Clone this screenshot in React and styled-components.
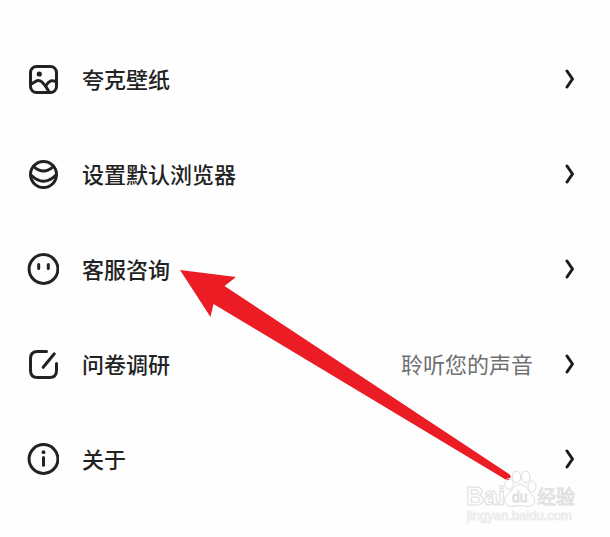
import React from "react";
import styled, { createGlobalStyle } from "styled-components";

const WallpaperIcon = () => (
  <Icon viewBox="0 0 32 32">
    <rect x="3.5" y="3.5" width="26" height="26" rx="6" />
    <circle className="solid" cx="12.3" cy="11" r="2.6" />
    <path d="M3.5 21.5 L8.5 18.4 Q12 16.2 15 19 Q19 23 22 28.7" />
    <path d="M18.8 22.8 Q23.5 15 29.5 19" />
  </Icon>
);

const BrowserIcon = () => (
  <Icon viewBox="0 0 32 32">
    <circle cx="16.5" cy="16.5" r="13" />
    <path d="M6.5 8.5 Q16.5 17.5 26.5 8.5" />
    <path d="M4 17 Q16.5 29.5 29 17" />
  </Icon>
);

const ServiceIcon = () => (
  <Icon viewBox="0 0 32 32">
    <circle cx="16.5" cy="16" r="14.4" />
    <path d="M11.7 11.5 V15.5 M21.3 11.5 V15.5" />
  </Icon>
);

const SurveyIcon = () => (
  <Icon viewBox="0 0 32 32">
    <path d="M19.5 3.5 H10.5 Q3.5 3.5 3.5 10.5 V22.5 Q3.5 29.5 10.5 29.5 H22.5 Q29.5 29.5 29.5 22.5 V15.5" />
    <path d="M27.3 5.8 L16.2 19.3" />
  </Icon>
);

const AboutIcon = () => (
  <Icon viewBox="0 0 32 32">
    <circle cx="16.5" cy="16" r="14.4" />
    <circle className="solid" cx="16.5" cy="9.2" r="1.9" />
    <path d="M16.5 14.5 V22.3" />
  </Icon>
);

const items = [
  { label: "夸克壁纸", icon: WallpaperIcon },
  { label: "设置默认浏览器", icon: BrowserIcon },
  { label: "客服咨询", icon: ServiceIcon },
  { label: "问卷调研", icon: SurveyIcon, note: "聆听您的声音" },
  { label: "关于", icon: AboutIcon },
];

const MenuRow = ({ item }) => {
  const ItemIcon = item.icon;
  return (
    <li>
      <RowButton type="button">
        <ItemIcon />
        <Label>{item.label}</Label>
        {item.note ? <Note>{item.note}</Note> : null}
        <Chevron viewBox="0 0 10 20" aria-hidden="true">
          <path d="M2 2 L7.5 10 L2 18" />
        </Chevron>
      </RowButton>
    </li>
  );
};

const App = () => {
  return (
    <Page>
      <GlobalStyle />
      <MenuList>
        {items.map((item) => (
          <MenuRow key={item.label} item={item} />
        ))}
      </MenuList>
      <Arrow viewBox="0 0 332 212" aria-hidden="true">
        <path d="M0 0 L56 7 L44.5 16 L329 204 A3.2 3.2 0 0 1 325.5 209.5 L33.5 34 L30.5 47 Z" />
      </Arrow>
      <Watermark viewBox="0 0 116 56" aria-hidden="true">
        <ellipse cx="45" cy="16" rx="4.3" ry="5.5" />
        <ellipse cx="52.5" cy="9" rx="4.3" ry="5.8" />
        <ellipse cx="61.7" cy="9" rx="4.3" ry="5.8" />
        <ellipse cx="68" cy="18.5" rx="4" ry="5.5" />
        <path d="M56 16.5 C62 16.5 63 21 67 25.5 C74 33 70 39 63 38.5 C60 38.5 59 37.5 56 37.5 C53 37.5 51 38.5 48 38.500 C40 38.5 38 31 44.5 25.500 C49.5 21.500 50 16.500 56 16.5 Z" />
        <text className="brand" x="2" y="37">
          Bai
        </text>
        <text className="du" x="48" y="34">
          du
        </text>
        <text className="han" x="73" y="36">
          经验
        </text>
        <text className="site" x="3" y="52">
          jingyan.baidu.com
        </text>
      </Watermark>
    </Page>
  );
};

const GlobalStyle = createGlobalStyle`
  body {
    margin: 0;
    background: #fefefe;
  }
  * {
    box-sizing: border-box;
  }
`;

const Page = styled.main`
  position: relative;
  padding: 31px 0;
  font-family: "Noto Sans CJK SC", sans-serif;
  color: #222;
`;

const MenuList = styled.ul`
  margin: 0;
  padding: 0;
  list-style: none;
`;

const RowButton = styled.button`
  display: flex;
  align-items: center;
  width: 100%;
  height: 95px;
  padding: 0 35px 0 27px;
  border: none;
  background: none;
  font-family: inherit;
  font-size: 22px;
  line-height: 32px;
  color: inherit;
  text-align: left;
  cursor: pointer;
`;

const Icon = styled.svg`
  flex: none;
  width: 32px;
  height: 32px;
  margin-right: 23px;
  fill: none;
  stroke: #222;
  stroke-width: 3;
  stroke-linecap: round;
  stroke-linejoin: round;
  .solid {
    fill: #222;
    stroke: none;
  }
`;

const Label = styled.span`
  flex: 1;
  padding-bottom: 2px;
  font-weight: 500;
`;

const Note = styled.span`
  margin-right: 32px;
  padding-bottom: 2px;
  color: #707070;
`;

const Chevron = styled.svg`
  flex: none;
  width: 10px;
  height: 20px;
  fill: none;
  stroke: #1c1c1c;
  stroke-width: 3;
  stroke-linecap: round;
  stroke-linejoin: round;
`;

const Arrow = styled.svg`
  position: absolute;
  top: 270px;
  left: 180px;
  width: 332px;
  height: 212px;
  fill: #ec1c24;
  pointer-events: none;
`;

const Watermark = styled.svg`
  position: absolute;
  top: 468px;
  left: 464px;
  width: 116px;
  height: 56px;
  overflow: visible;
  pointer-events: none;
  fill: none;
  stroke: #dedede;
  stroke-width: 1;
  font-family: "Liberation Sans", "Noto Sans CJK SC", sans-serif;
  font-weight: 700;
  .brand {
    font-size: 25px;
  }
  .du {
    font-size: 14px;
    font-weight: 400;
  }
  .han {
    font-size: 19px;
    font-weight: 400;
  }
  .site {
    font-size: 13px;
    font-weight: 400;
    stroke: #ececec;
  }
`;

export default App;
